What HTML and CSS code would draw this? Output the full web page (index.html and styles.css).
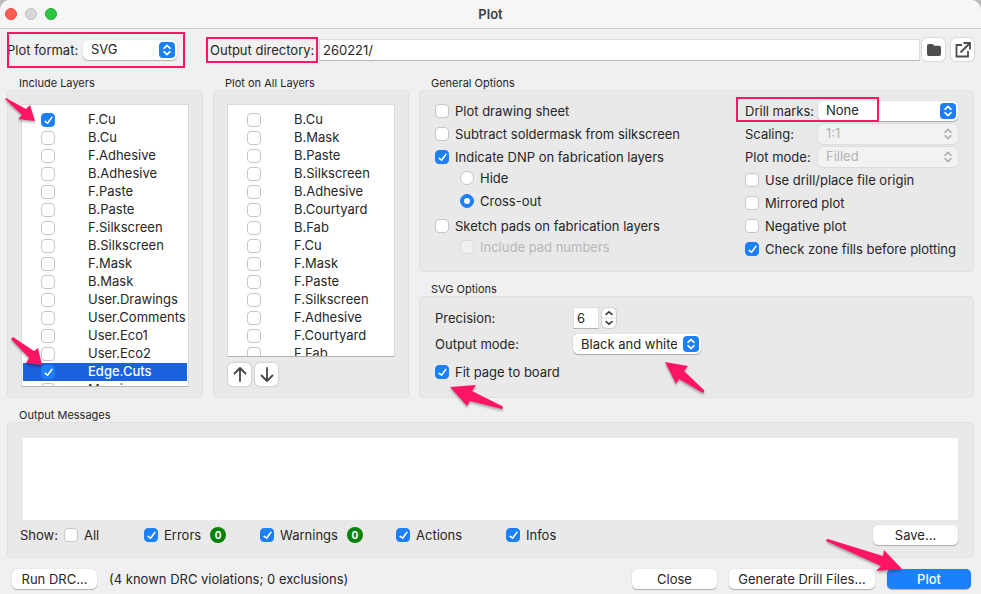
FILE: index.html
```html
<!DOCTYPE html>
<html lang="en">
<head>
    <meta charset="UTF-8">
    <meta name="viewport" content="width=device-width, initial-scale=1.0">
    <title>Plot</title>
    <link rel="stylesheet" href="styles.css">
</head>
<body>
    <svg class="defs" width="0" height="0">
        <symbol id="updown" viewBox="0 0 16 16">
            <path d="M5 6.3 8 3.4 11 6.3M5 9.7 8 12.6 11 9.7" fill="none" stroke="currentColor" stroke-width="1.6" stroke-linecap="round" stroke-linejoin="round"/>
        </symbol>
    </svg>
    <div class="window">
        <header class="titlebar">
            <div class="lights"><i class="red"></i><i class="gray"></i><i class="green"></i></div>
            <h1>Plot</h1>
        </header>

        <div class="toolbar">
            <div class="format">
                <label for="format">Plot format:</label>
                <div class="select">
                    <select id="format"><option>SVG</option></select>
                    <svg><use href="#updown"/></svg>
                </div>
                <span class="box"></span>
            </div>
            <div class="directory">
                <label for="dir">Output directory:<span class="box"></span></label>
                <input type="text" class="field" id="dir" value="260221/">
            </div>
            <button class="icon" aria-label="Browse">
                <svg width="16" height="16" viewBox="0 0 16 16"><path d="M1 4.2Q1 2 3 2h3q1 0 1.500.8l.8 1H13q2 0 2 2V12q0 2-2 2H3q-2 0-2-2z" fill="#4d4d4d"/></svg>
            </button>
            <button class="icon open" aria-label="Open directory">
                <svg width="18" height="18" viewBox="0 0 18 18" fill="none" stroke="#4d4d4d" stroke-width="1.8"><path d="M8 4H2.500v11.500h11.500V10"/><path d="M6.500 11.500 15 3M9.500 2h6.500v6.500"/></svg>
            </button>
        </div>

        <main>
            <section class="layers">
                <h2>Include Layers</h2>
                <div class="panel">
                    <div class="list">
                        <label><input type="checkbox" checked>F.Cu</label>
                        <label><input type="checkbox">B.Cu</label>
                        <label><input type="checkbox">F.Adhesive</label>
                        <label><input type="checkbox">B.Adhesive</label>
                        <label><input type="checkbox">F.Paste</label>
                        <label><input type="checkbox">B.Paste</label>
                        <label><input type="checkbox">F.Silkscreen</label>
                        <label><input type="checkbox">B.Silkscreen</label>
                        <label><input type="checkbox">F.Mask</label>
                        <label><input type="checkbox">B.Mask</label>
                        <label><input type="checkbox">User.Drawings</label>
                        <label><input type="checkbox">User.Comments</label>
                        <label><input type="checkbox">User.Eco1</label>
                        <label><input type="checkbox">User.Eco2</label>
                        <label class="active"><input type="checkbox" checked>Edge.Cuts</label>
                        <label><input type="checkbox">Margin</label>
                    </div>
                    <svg class="arrow to-fcu" width="44" height="32" viewBox="0 94 44 32"><path d="M5 99 6 98 26 109 30 105 35 121 18 119 22 115z"/></svg>
                    <svg class="arrow to-edge" width="40" height="36" viewBox="8 334 40 36"><path d="M11 339 13 337 34 351 38 348 42 365 26 363 29 358z"/></svg>
                </div>
            </section>

            <section class="layers">
                <h2>Plot on All Layers</h2>
                <div class="panel">
                    <div class="list short">
                        <label><input type="checkbox">B.Cu</label>
                        <label><input type="checkbox">B.Mask</label>
                        <label><input type="checkbox">B.Paste</label>
                        <label><input type="checkbox">B.Silkscreen</label>
                        <label><input type="checkbox">B.Adhesive</label>
                        <label><input type="checkbox">B.Courtyard</label>
                        <label><input type="checkbox">B.Fab</label>
                        <label><input type="checkbox">F.Cu</label>
                        <label><input type="checkbox">F.Mask</label>
                        <label><input type="checkbox">F.Paste</label>
                        <label><input type="checkbox">F.Silkscreen</label>
                        <label><input type="checkbox">F.Adhesive</label>
                        <label><input type="checkbox">F.Courtyard</label>
                        <label><input type="checkbox">F.Fab</label>
                    </div>
                    <div class="order">
                        <button class="icon" aria-label="Move up">
                            <svg width="16" height="16" viewBox="0 0 16 16"><path d="M8 14V1M2.500 6.500 8 1l5.500 5.500"/></svg>
                        </button>
                        <button class="icon" aria-label="Move down">
                            <svg width="16" height="16" viewBox="0 0 16 16"><path d="M8 1v13M2.500 8.500 8 14l5.500-5.500"/></svg>
                        </button>
                    </div>
                </div>
            </section>

            <div class="options">
                <section>
                    <h2>General Options</h2>
                    <div class="panel general">
                        <div class="left">
                            <label class="check"><input type="checkbox">Plot drawing sheet</label>
                            <label class="check"><input type="checkbox">Subtract soldermask from silkscreen</label>
                            <label class="check"><input type="checkbox" checked>Indicate DNP on fabrication layers</label>
                            <div class="sub">
                                <label class="check"><input type="radio" name="dnp">Hide</label>
                                <label class="check"><input type="radio" name="dnp" checked>Cross-out</label>
                            </div>
                            <label class="check"><input type="checkbox">Sketch pads on fabrication layers</label>
                            <div class="sub">
                                <label class="check disabled"><input type="checkbox" disabled>Include pad numbers</label>
                            </div>
                        </div>
                        <div class="right">
                            <div class="row">
                                <label for="drill">Drill marks:</label>
                                <div class="select">
                                    <select id="drill"><option>None</option></select>
                                    <svg><use href="#updown"/></svg>
                                </div>
                                <span class="box"></span>
                            </div>
                            <div class="row">
                                <label for="scaling">Scaling:</label>
                                <div class="select disabled">
                                    <select id="scaling" disabled><option>1:1</option></select>
                                    <svg><use href="#updown"/></svg>
                                </div>
                            </div>
                            <div class="row">
                                <label for="mode">Plot mode:</label>
                                <div class="select disabled">
                                    <select id="mode" disabled><option>Filled</option></select>
                                    <svg><use href="#updown"/></svg>
                                </div>
                            </div>
                            <label class="check"><input type="checkbox">Use drill/place file origin</label>
                            <label class="check"><input type="checkbox">Mirrored plot</label>
                            <label class="check"><input type="checkbox">Negative plot</label>
                            <label class="check"><input type="checkbox" checked>Check zone fills before plotting</label>
                        </div>
                    </div>
                </section>
                <section class="grow">
                    <h2>SVG Options</h2>
                    <div class="panel svg-options">
                        <div class="row">
                            <label for="precision">Precision:</label>
                            <input type="text" class="field" id="precision" value="6">
                            <button class="stepper" aria-label="Change precision">
                                <svg width="14" height="20" viewBox="0 0 14 20"><path d="M4 6.500 7 3.800 10 6.500M4 13.500 7 16.200 10 13.500" fill="none" stroke="#333" stroke-width="1.600" stroke-linecap="round" stroke-linejoin="round"/><path d="M0 10h14" stroke="#ddd"/></svg>
                            </button>
                        </div>
                        <div class="row">
                            <label for="output">Output mode:</label>
                            <div class="select">
                                <select id="output"><option>Black and white</option></select>
                                <svg><use href="#updown"/></svg>
                            </div>
                        </div>
                        <label class="check fit"><input type="checkbox" checked>Fit page to board</label>
                        <svg class="arrow to-fit" width="64" height="34" viewBox="446 380 64 34"><path d="M450 387 476 385 472 391 502 406Q504 408 502 409L470 401 467 406z"/></svg>
                        <svg class="arrow to-output" width="46" height="40" viewBox="662 358 46 40"><path d="M665 362 688 366 684 371 704 390Q705 392 703 393L679 379 676 384z"/></svg>
                    </div>
                </section>
            </div>
        </main>

        <section class="messages">
            <h2 id="messages">Output Messages</h2>
            <div class="panel">
                <textarea readonly aria-labelledby="messages"></textarea>
                <div class="show">
                    <span>Show:</span>
                    <div class="filters">
                        <label class="check"><input type="checkbox">All</label>
                        <label class="check"><input type="checkbox" checked>Errors<b class="badge">0</b></label>
                        <label class="check"><input type="checkbox" checked>Warnings<b class="badge">0</b></label>
                        <label class="check"><input type="checkbox" checked>Actions</label>
                        <label class="check"><input type="checkbox" checked>Infos</label>
                    </div>
                    <button class="btn">Save...</button>
                </div>
            </div>
        </section>

        <footer>
            <button class="btn">Run DRC...</button>
            <span class="drc">(4 known DRC violations; 0 exclusions)</span>
            <button class="btn">Close</button>
            <button class="btn wide">Generate Drill Files...</button>
            <div class="plot">
                <button class="btn primary">Plot</button>
                <svg class="arrow to-plot" width="86" height="42" viewBox="822 535 86 42"><path d="M826 541Q826 539 828 539L883 556 884 550 902 569 876 571 881 566z"/></svg>
            </div>
        </footer>
    </div>
</body>
</html>
```

FILE: styles.css
```css
*{
    box-sizing: border-box;
    margin: 0;
    padding: 0;
}
body{
    background-color: #b9b9b9;
    color: #262626;
    font: 13px/18px Inter, "Liberation Sans", sans-serif;
}
button, input, select, textarea{
    font: inherit;
    color: inherit;
    border: 0;
}
.defs{
    position: absolute;
}
.window{
    display: flex;
    flex-direction: column;
    min-height: 100vh;
    background-color: #f0f0f0;
    border-radius: 10px 10px 0 0;
    overflow: hidden;
}

/* title bar */
.titlebar{
    display: grid;
    grid-template-columns: 1fr auto 1fr;
    align-items: center;
    height: 29px;
    padding: 0 5px;
    background-color: #f6f6f6;
    border-bottom: 1px solid #cdcdcd;
}
.titlebar h1{
    font-size: 13px;
    font-weight: 600;
    color: #3c3c3c;
}
.lights{
    display: flex;
    gap: 8px;
}
.lights i{
    width: 12px;
    height: 12px;
    border-radius: 50%;
    border: 1px solid;
}
.lights .red{
    background-color: #ff5c54;
    border-color: #e2463f;
}
.lights .gray{
    background-color: #d8d8d8;
    border-color: #c2c2c2;
}
.lights .green{
    background-color: #28c840;
    border-color: #1eab2f;
}

/* toolbar */
.toolbar{
    display: flex;
    align-items: center;
    height: 47px;
    padding: 0 7px 6px;
}
.format, .directory{
    display: flex;
    align-items: center;
    position: relative;
}
.format{
    width: 178px;
    height: 36px;
}
.format label{
    width: 76px;
}
.format .select{
    width: 94px;
}
.directory{
    flex: 1;
    margin: 0 2px 0 25px;
}
.directory label{
    position: relative;
    flex: none;
    width: 109px;
}
.box{
    position: absolute;
    border: 2px solid #ff1561;
    pointer-events: none;
}
.format .box{
    inset: 0;
}
.directory .box{
    inset: -4px 1px -4px -4px;
}
.field{
    height: 22px;
    padding: 0 3px;
    background-color: #fff;
    border: 1px solid #dedede;
    border-bottom-color: #b5b5b5;
}
.directory .field{
    flex: 1;
    min-width: 0;
}
.icon{
    display: flex;
    align-items: center;
    justify-content: center;
    width: 23px;
    height: 23px;
    background-color: #fff;
    border-radius: 5px;
    box-shadow: 0 0 1px 1px rgba(0,0,0,0.1);
}
.open{
    margin-left: 6px;
}

/* drop-downs */
.select{
    position: relative;
    height: 20px;
}
.select select{
    appearance: none;
    display: block;
    width: 100%;
    height: 20px;
    padding: 0 24px 1px 8px;
    background-color: #fff;
    border-radius: 5px;
    box-shadow: 0 1px 1px rgba(0,0,0,0.25), 0 0 1px rgba(0,0,0,0.2);
}
.select svg{
    position: absolute;
    right: 2px;
    top: 2px;
    width: 16px;
    height: 16px;
    border-radius: 4px;
    color: #fff;
    background-color: #1c80fb;
    pointer-events: none;
}
.select.disabled select{
    opacity: 1;
    color: #b4b4b4;
    background-color: #f2f2f2;
    box-shadow: 0 0 1px 1px rgba(0,0,0,0.06);
}
.select.disabled svg{
    color: #b0b0b0;
    background: none;
}

/* check boxes and radios */
input[type=checkbox], input[type=radio]{
    appearance: none;
    flex: none;
    display: flex;
    justify-content: center;
    width: 14px;
    height: 14px;
    background-color: #fff;
    border: 1px solid #c6c6c6;
    border-radius: 4px;
}
input[type=radio]{
    border-radius: 50%;
}
input:checked{
    background-color: #1c80fb;
    border-color: #1c80fb;
}
input[type=checkbox]:checked::after{
    content: "";
    width: 3px;
    height: 7px;
    margin-top: 1px;
    border: solid #fff;
    border-width: 0 2px 2px 0;
    border-radius: 1px;
    transform: rotate(36deg);
}
input[type=radio]:checked::after{
    content: "";
    width: 6px;
    height: 6px;
    margin-top: 3px;
    border-radius: 50%;
    background-color: #fff;
}
input[type=checkbox]:disabled{
    background-color: #f0f0f0;
    border-color: #dadada;
}
.check{
    display: flex;
    align-items: center;
    gap: 6px;
    height: 23px;
    white-space: nowrap;
}
.check.disabled{
    color: #b8b8b8;
}

/* groups */
main{
    display: flex;
    gap: 10px;
    padding: 0 7px;
}
section{
    display: flex;
    flex-direction: column;
}
h2{
    padding-left: 12px;
    font-size: 11px;
    font-weight: 400;
    line-height: 14px;
}
.panel{
    position: relative;
    flex: 1;
    background-color: #e9e9e9;
    border: 1px solid #e0e0e0;
    border-radius: 5px;
}
.layers{
    flex: none;
    width: 196px;
}
.layers .panel{
    padding: 13px 13px 10px;
}
.list{
    height: 283px;
    padding: 6px 1px 0;
    overflow: hidden;
    background-color: #fff;
    border: 1px solid #dadada;
    border-bottom-color: #b5b5b5;
}
.list.short{
    height: 253px;
}
.list label{
    display: flex;
    align-items: center;
    gap: 33px;
    height: 18px;
    padding: 0 0 2px 18px;
    line-height: 16px;
}
.list input[type=checkbox]{
    margin-top: 2px;
}
.list .active{
    background-color: #1a62dc;
    color: #fff;
    font-weight: 500;
}
.order{
    display: flex;
    gap: 4px;
    padding: 6px 1px 0;
}
.order path{
    fill: none;
    stroke: #444;
    stroke-width: 1.8;
    stroke-linecap: round;
    stroke-linejoin: round;
}

.options{
    flex: 1;
    display: flex;
    flex-direction: column;
    gap: 10px;
}
.grow{
    flex: 1;
}
.general{
    display: flex;
    justify-content: space-between;
    padding: 8px 15px 11px;
}
.sub{
    margin: -2px 0 2px;
    padding-left: 25px;
}
.right{
    width: 213px;
}
.row{
    position: relative;
    display: flex;
    align-items: center;
}
.right .row{
    height: 23px;
}
.right .row label{
    width: 73px;
}
.right .select{
    flex: 1;
}
.right .box{
    left: -9px;
    top: -2px;
    width: 143px;
    height: 25px;
}
.svg-options{
    padding: 10px 15px;
}
.svg-options .row{
    height: 22px;
    margin-bottom: 4px;
}
.svg-options .row label{
    width: 138px;
}
#precision{
    width: 26px;
}
.svg-options .select{
    width: 128px;
}
.svg-options .fit{
    height: 25px;
}
.stepper{
    width: 14px;
    height: 20px;
    margin-left: 3px;
    background-color: #fff;
    border-radius: 5px;
    box-shadow: 0 0 1px 1px rgba(0,0,0,0.12);
}
.stepper svg{
    display: block;
}

/* messages */
.messages{
    padding: 10px 7px 0;
}
.messages .panel{
    padding: 15px 15px 7px;
}
textarea{
    display: block;
    width: 100%;
    height: 82px;
    background-color: #fff;
    resize: none;
}
.show{
    display: flex;
    align-items: center;
    height: 30px;
    margin-left: -3px;
}
.show span{
    width: 44px;
}
.filters{
    flex: 1;
    display: grid;
    grid-template-columns: 80px 116px 136px 110px auto;
}
.badge{
    width: 16px;
    height: 16px;
    margin-left: 3px;
    border-radius: 50%;
    background-color: #068206;
    color: #fff;
    font-size: 10px;
    line-height: 16px;
    text-align: center;
}

/* buttons */
.btn{
    width: 85px;
    height: 20px;
    padding-bottom: 1px;
    background-color: #fff;
    border-radius: 5px;
    box-shadow: 0 1px 1px rgba(0,0,0,0.25), 0 0 1px rgba(0,0,0,0.2);
    white-space: nowrap;
}
.wide{
    width: 146px;
}
.primary{
    display: block;
    width: 84px;
    background-color: #1c80fb;
    color: #fff;
    font-weight: 500;
}
footer{
    display: flex;
    align-items: center;
    gap: 12px;
    padding: 11px 10px 5px 12px;
}
.drc{
    flex: 1;
}
.plot{
    position: relative;
}

/* arrows */
.arrow{
    position: absolute;
    fill: #ff1561;
    overflow: visible;
    filter: drop-shadow(0 2px 1px rgba(0,0,0,0.3));
    pointer-events: none;
}
.to-fcu{
    left: -8px;
    top: 3px;
}
.to-edge{
    left: 0;
    top: 243px;
}
.to-fit{
    left: 26px;
    top: 83px;
}
.to-output{
    left: 242px;
    top: 61px;
}
.to-plot{
    left: -65px;
    top: -34px;
}
```
